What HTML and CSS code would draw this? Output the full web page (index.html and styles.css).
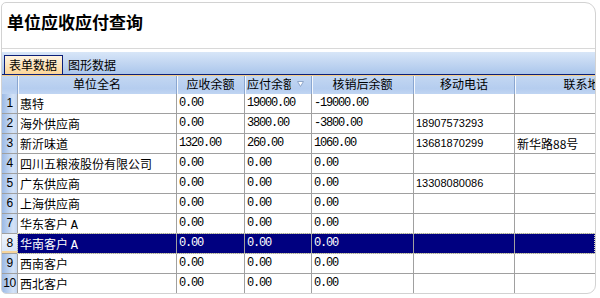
FILE: index.html
```html
<!DOCTYPE html>
<html lang="zh-CN">
<head>
  <meta charset="UTF-8" />
  <title>单位应收应付查询</title>
  <link rel="stylesheet" href="styles.css">
</head>
<body>

  <div class="painel">
    <!-- Título -->
    <div class="titulo">单位应收应付查询</div>

    <!-- Abas -->
    <div class="abas">
      <div class="aba ativa">表单数据</div>
      <div class="aba">图形数据</div>
    </div>

    <!-- Tabela -->
    <div class="grade">
      <div class="linha cab">
        <div class="num"></div>
        <div class="cel">单位全名</div>
        <div class="cel">应收余额</div>
        <div class="cel esq"><span class="corte">应付余额</span><svg class="seta" width="7" height="6" viewBox="0 0 7 6"><polygon points="0.5,0.5 6.5,0.5 3.5,5.5" fill="#fff" stroke="#8ea6c8" stroke-width="1"/></svg></div>
        <div class="cel">核销后余额</div>
        <div class="cel">移动电话</div>
        <div class="cel">联系地址</div>
      </div>

      <div class="linha">
        <div class="num">1</div>
        <div class="cel">惠特</div>
        <div class="cel m">0.00</div>
        <div class="cel m">19000.00</div>
        <div class="cel m">-19000.00</div>
        <div class="cel fone"></div>
        <div class="cel"></div>
      </div>
      <div class="linha">
        <div class="num">2</div>
        <div class="cel">海外供应商</div>
        <div class="cel m">0.00</div>
        <div class="cel m">3800.00</div>
        <div class="cel m">-3800.00</div>
        <div class="cel fone">18907573293</div>
        <div class="cel"></div>
      </div>
      <div class="linha">
        <div class="num">3</div>
        <div class="cel">新沂味道</div>
        <div class="cel m">1320.00</div>
        <div class="cel m">260.00</div>
        <div class="cel m">1060.00</div>
        <div class="cel fone">13681870299</div>
        <div class="cel">新华路88号</div>
      </div>
      <div class="linha">
        <div class="num">4</div>
        <div class="cel">四川五粮液股份有限公司</div>
        <div class="cel m">0.00</div>
        <div class="cel m">0.00</div>
        <div class="cel m">0.00</div>
        <div class="cel fone"></div>
        <div class="cel"></div>
      </div>
      <div class="linha">
        <div class="num">5</div>
        <div class="cel">广东供应商</div>
        <div class="cel m">0.00</div>
        <div class="cel m">0.00</div>
        <div class="cel m">0.00</div>
        <div class="cel fone">13308080086</div>
        <div class="cel"></div>
      </div>
      <div class="linha">
        <div class="num">6</div>
        <div class="cel">上海供应商</div>
        <div class="cel m">0.00</div>
        <div class="cel m">0.00</div>
        <div class="cel m">0.00</div>
        <div class="cel fone"></div>
        <div class="cel"></div>
      </div>
      <div class="linha">
        <div class="num">7</div>
        <div class="cel">华东客户 <span class="m">A</span></div>
        <div class="cel m">0.00</div>
        <div class="cel m">0.00</div>
        <div class="cel m">0.00</div>
        <div class="cel fone"></div>
        <div class="cel"></div>
      </div>
      <div class="linha sel">
        <div class="num">8</div>
        <div class="cel">华南客户 <span class="m">A</span></div>
        <div class="cel m">0.00</div>
        <div class="cel m">0.00</div>
        <div class="cel m">0.00</div>
        <div class="cel fone"></div>
        <div class="cel"></div>
      </div>
      <div class="linha">
        <div class="num">9</div>
        <div class="cel">西南客户</div>
        <div class="cel m">0.00</div>
        <div class="cel m">0.00</div>
        <div class="cel m">0.00</div>
        <div class="cel fone"></div>
        <div class="cel"></div>
      </div>
      <div class="linha">
        <div class="num">10</div>
        <div class="cel">西北客户</div>
        <div class="cel m">0.00</div>
        <div class="cel m">0.00</div>
        <div class="cel m">0.00</div>
        <div class="cel fone"></div>
        <div class="cel"></div>
      </div>
    </div>
  </div>

</body>
</html>
```

FILE: styles.css
```css
body {
  margin: 0;
  font-family: "Noto Sans CJK SC", sans-serif;
  font-size: 12px;
  color: #000;
  background: #fff;
}

.painel {
  margin: 2px 0 0 1px;
  width: 595px;
  box-sizing: border-box;
  border: 1px solid #d2d2d2;
  border-radius: 5px 11px 9px 5px;
  overflow: hidden;
}

.titulo {
  height: 46px;
  box-sizing: border-box;
  padding: 9px 0 0 5px;
  border-bottom: 1px solid #d8d8d8;
  font-size: 17px;
  font-weight: bold;
  line-height: 20px;
}

.abas {
  margin-top: 3px;
  height: 23px;
  box-sizing: border-box;
  padding-left: 2px;
  display: flex;
  align-items: flex-end;
  background: linear-gradient(#d8e6f8, #abc6eb);
  border-bottom: 1px solid #0c1f78;
}

.aba {
  height: 19px;
  box-sizing: border-box;
  padding: 0 4px;
  line-height: 18px;
  border: 1px solid transparent;
  border-bottom: none;
}

.aba.ativa {
  padding: 0 5px 0 4px;
  border-color: #0c1f78;
  background: linear-gradient(#fff4e2, #fbd597);
}

.grade {
  border-top: 1px solid #f6cd86;
}

.linha {
  position: relative;
  display: grid;
  grid-template-columns: 15px 159px 68px 67px 102px 101px 146px;
  height: 20px;
  box-sizing: border-box;
  border-bottom: 1px solid #a0a0a0;
}

.linha:last-child {
  height: 19px;
  border-bottom: none;
}

.cel {
  border-left: 1px solid #a0a0a0;
  padding: 0 2px;
  line-height: 19px;
  white-space: nowrap;
  overflow: hidden;
}

.num {
  background: linear-gradient(to right, #9cbae6, #d4e3f7 75%, #c3d6f1);
  text-align: center;
  font-family: "Liberation Sans", sans-serif;
  font-size: 12px;
  line-height: 19px;
  letter-spacing: -0.5px;
}

.m {
  font-family: "Liberation Mono", monospace;
  font-size: 12px;
  letter-spacing: -1.2px;
}

.fone {
  font-family: "Liberation Sans", sans-serif;
  font-size: 11px;
}

/* cabeçalho */
.cab {
  height: 18px;
  border-bottom: none;
  background: linear-gradient(#c3d7f2, #b5cdef 70%, #c0d5f2);
}

.cab .num {
  background: none;
}

.cab .cel {
  border-left: 1px solid #8aa6d0;
  box-shadow: inset 1px 0 #f4f8fd;
  text-align: center;
  line-height: 15px;
  overflow: visible;
}

.cab .cel:last-child {
  overflow: hidden;
}

.cab .cel.esq {
  display: flex;
  align-items: flex-start;
  text-align: left;
  padding-left: 2px;
}

.corte {
  width: 44px;
  height: 16px;
  overflow: hidden;
  flex-shrink: 0;
}

.seta {
  margin: 5px 0 0 6px;
  flex-shrink: 0;
}

/* linha selecionada */
.sel .cel {
  background: #000080;
  color: #fff;
}

.sel .num {
  background: linear-gradient(#eef4fc, #d6e4f7);
  box-shadow: inset 0 -2px #f6d49a;
}

.sel::after {
  content: '';
  position: absolute;
  left: 15px;
  right: 0;
  top: -1px;
  bottom: -1px;
  border: 1px dotted #d8d8b8;
  pointer-events: none;
}
```
